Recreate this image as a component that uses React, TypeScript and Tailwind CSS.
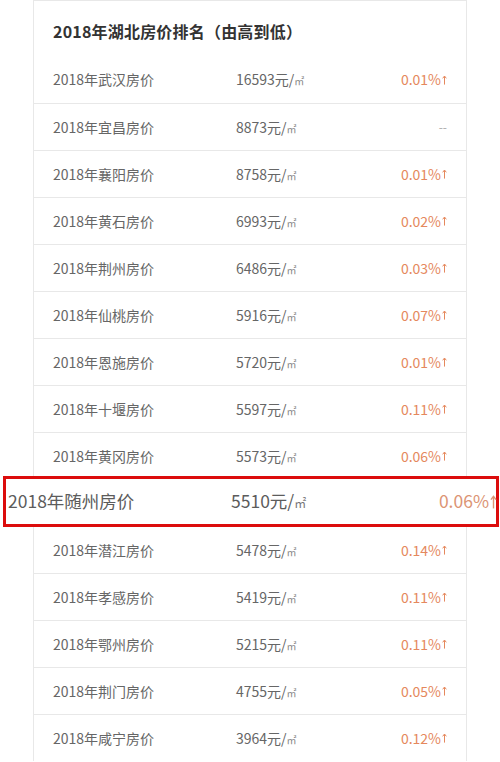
import React from 'react';

interface Row {
  city: string;
  price: number;
  change: string | null;
}

const rows: Row[] = [
  { city: '武汉', price: 16593, change: '0.01%' },
  { city: '宜昌', price: 8873, change: null },
  { city: '襄阳', price: 8758, change: '0.01%' },
  { city: '黄石', price: 6993, change: '0.02%' },
  { city: '荆州', price: 6486, change: '0.03%' },
  { city: '仙桃', price: 5916, change: '0.07%' },
  { city: '恩施', price: 5720, change: '0.01%' },
  { city: '十堰', price: 5597, change: '0.11%' },
  { city: '黄冈', price: 5573, change: '0.06%' },
  { city: '随州', price: 5510, change: '0.06%' },
  { city: '潜江', price: 5478, change: '0.14%' },
  { city: '孝感', price: 5419, change: '0.11%' },
  { city: '鄂州', price: 5215, change: '0.11%' },
  { city: '荆门', price: 4755, change: '0.05%' },
  { city: '咸宁', price: 3964, change: '0.12%' },
];

const FONT = "font-['Noto_Sans_CJK_SC','Noto_Sans',sans-serif]";

const UpArrow = ({ className }: { className?: string }) => (
  <svg viewBox="0 0 6 12" className={className} fill="none" stroke="currentColor" strokeWidth="1.2">
    <path d="M3 11.5V1.5" />
    <path d="M0.8 4 L3 1.2 L5.2 4" />
  </svg>
);

const App: React.FC = () => {
  return (
    <div className={`w-[500px] h-[762px] bg-white overflow-hidden ${FONT}`}>
      <div className="mx-[33px] border-x border-t border-[#e8e8e8]">
        <div className="h-[55px] flex items-center px-[19px] pt-[5px]">
          <h2 className="text-[16px] font-bold text-[#333] tracking-[0.2px]">2018年湖北房价排名（由高到低）</h2>
        </div>

        {rows.map((r, i) =>
          i === 9 ? (
            // zoomed-in highlight of this row, wider than the card
            <div key={r.city} className="relative h-[47px] border-t border-[#e8e8e8]">
              <div className="absolute left-[-31px] top-[-4px] w-[496px] h-[51px] border-[3px] border-[#dc0c0c] bg-white flex items-center pl-[2px] text-[17.5px] text-[#5c5c5c]">
                <span className="w-[223px]">2018年{r.city}房价</span>
                <span className="flex-1 flex items-baseline">
                  {r.price}元/<span className="text-[12px] text-[#777]">㎡</span>
                </span>
                <span className="flex items-center text-[#dc9474] -mr-[1px]">
                  {r.change}
                  <UpArrow className="w-[7px] h-[16px] ml-[1px]" />
                </span>
              </div>
            </div>
          ) : (
            <div
              key={r.city}
              className={`h-[47px] flex items-center px-[19px] text-[14px] text-[#666] ${i > 0 ? 'border-t border-[#e8e8e8]' : ''}`}
            >
              <span className="w-[183px]">2018年{r.city}房价</span>
              <span className="flex-1 flex items-baseline">
                {r.price}元/<span className="text-[10px] text-[#888]">㎡</span>
              </span>
              {r.change ? (
                <span className="flex items-center text-[#e5885d]">
                  {r.change}
                  <UpArrow className="w-[5px] h-[12px] ml-[1px]" />
                </span>
              ) : (
                <span className="text-[#aaa] text-[12px]">--</span>
              )}
            </div>
          )
        )}
      </div>
    </div>
  );
};

export default App;
